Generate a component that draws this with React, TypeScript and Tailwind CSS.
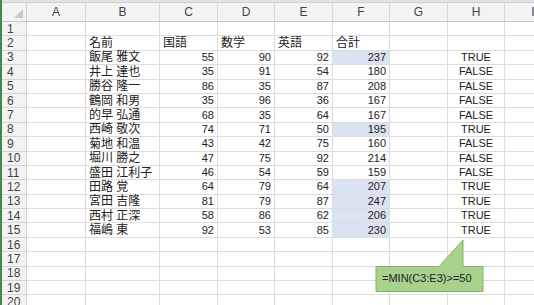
import React from "react";

const cols = ["A", "B", "C", "D", "E", "F", "G", "H", "I"];
const widths = [59, 74, 58, 57, 58, 57, 58, 57, 57];

type Row = [string, number, number, number, number, boolean];

const data: Row[] = [
  ["飯尾 雅文", 55, 90, 92, 237, true],
  ["井上 達也", 35, 91, 54, 180, false],
  ["勝谷 隆一", 86, 35, 87, 208, false],
  ["鶴岡 和男", 35, 96, 36, 167, false],
  ["的早 弘通", 68, 35, 64, 167, false],
  ["西崎 敬次", 74, 71, 50, 195, true],
  ["菊地 和温", 43, 42, 75, 160, false],
  ["堀川 勝之", 47, 75, 92, 214, false],
  ["盛田 江利子", 46, 54, 59, 159, false],
  ["田路 覚", 64, 79, 64, 207, true],
  ["宮田 吉隆", 81, 79, 87, 247, true],
  ["西村 正深", 58, 86, 62, 206, true],
  ["福嶋 東", 92, 53, 85, 230, true],
];

type Cell = { text: string; align: string; hl?: boolean; jp?: boolean };

function cellsFor(r: number): Cell[] {
  const blank = { text: "", align: "left" };
  if (r === 2) {
    return [
      blank,
      { text: "名前", align: "left", jp: true },
      { text: "国語", align: "left", jp: true },
      { text: "数学", align: "left", jp: true },
      { text: "英語", align: "left", jp: true },
      { text: "合計", align: "left", jp: true },
      blank,
      blank,
      blank,
    ];
  }
  const d = data[r - 3];
  if (!d) return cols.map(() => blank);
  return [
    blank,
    { text: d[0], align: "left", jp: true },
    { text: String(d[1]), align: "right" },
    { text: String(d[2]), align: "right" },
    { text: String(d[3]), align: "right" },
    { text: String(d[4]), align: "right", hl: d[5] },
    blank,
    { text: d[5] ? "TRUE" : "FALSE", align: "center" },
    blank,
  ];
}

export default function App() {
  const rows = Array.from({ length: 20 }, (_, i) => i + 1);
  return (
    <div
      className="relative w-[534px] h-[305px] overflow-hidden bg-white text-[11px] text-[#222]"
      style={{ fontFamily: '"Liberation Sans", "Noto Sans CJK JP", sans-serif' }}
    >
      <div className="flex">
        <div className="w-[2px] h-[305px] bg-[#3f8a4f] shrink-0" />
        <div className="flex flex-col flex-1">
          <div className="h-[3px] bg-[#e3e3e3] border-b border-[#d0d0d0]" />
          {/* column headers */}
          <div className="flex h-[19px] bg-[#f3f3f3] border-b border-[#c8c8c8]">
            <div className="relative w-[25px] shrink-0 border-r border-[#d0d0d0]">
              <div className="absolute right-[3px] bottom-[3px] w-0 h-0 border-l-[9px] border-l-transparent border-b-[9px] border-b-[#c9c9c9]" />
            </div>
            {cols.map((c, i) => (
              <div
                key={c}
                className="shrink-0 flex items-center justify-center border-r border-[#dadada] text-[#444] text-[12px]"
                style={{ width: widths[i] }}
              >
                {c}
              </div>
            ))}
          </div>
          {rows.map((r) => (
            <div key={r} className="flex h-[14.4px] shrink-0">
              <div className="w-[25px] shrink-0 bg-[#f3f3f3] border-r border-b border-[#d4d4d4] flex items-center pl-[5px] text-[#444] text-[12px] leading-none">
                {r}
              </div>
              {cellsFor(r).map((c, i) => (
                <div
                  key={i}
                  className={`shrink-0 border-r border-b border-[#dcdcdc] flex items-center px-[3px] leading-none whitespace-nowrap ${
                    c.align === "right"
                      ? "justify-end"
                      : c.align === "center"
                        ? "justify-center"
                        : "justify-start"
                  } ${c.hl ? "bg-[#dbe3f3]" : ""} ${c.jp ? "text-[12px]" : ""}`}
                  style={{ width: widths[i] }}
                >
                  {c.text}
                </div>
              ))}
            </div>
          ))}
        </div>
      </div>

      {/* callout */}
      <div className="absolute left-[375px] top-[238px] w-[110px] h-[55px]">
        <svg width="110" height="55" className="absolute inset-0">
          <path
            d="M1 28.5 H64 L88 2 L88 28.5 H108 V53.5 H1 Z"
            fill="#a9d18e"
            stroke="#7fb35f"
            strokeWidth="1"
          />
        </svg>
        <div className="absolute left-[7px] top-[35px] text-[11px] text-[#222] leading-none">
          =MIN(C3:E3)&gt;=50
        </div>
      </div>
    </div>
  );
}
